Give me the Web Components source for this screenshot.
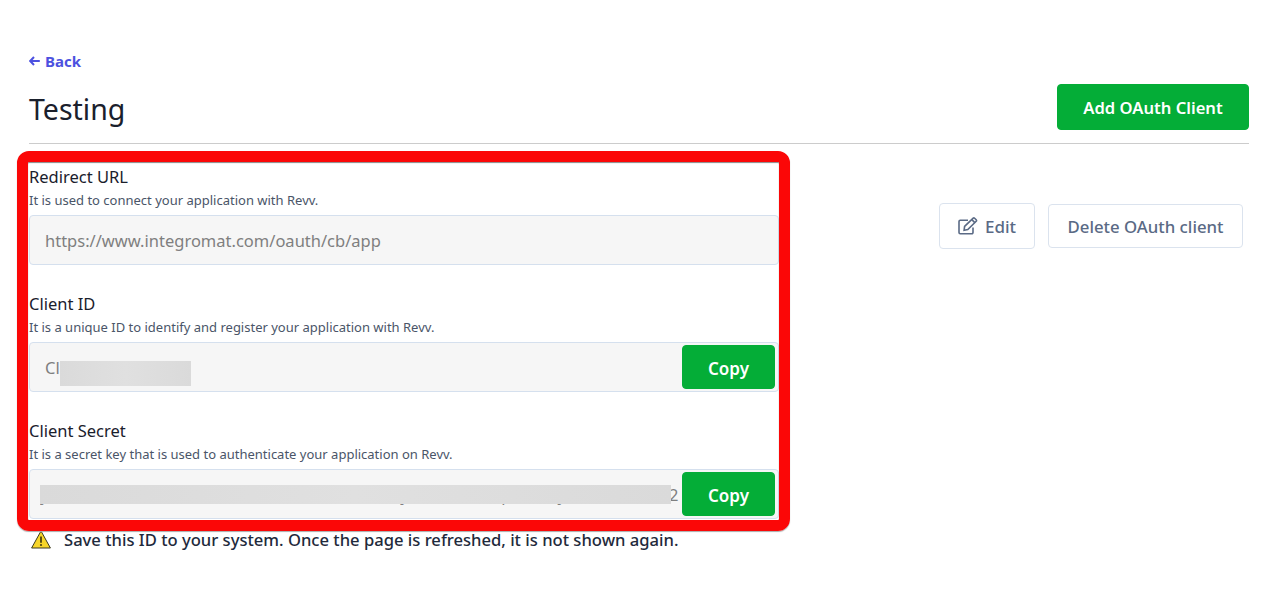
<!DOCTYPE html>
<html>
<head>
<meta charset="utf-8">
<title>Testing</title>
<style>
  html, body { margin: 0; background: #fff; }
  body { font-family: "Noto Sans", sans-serif; color: #1a202c; }
</style>
</head>
<body>
<oauth-page>
  <back-link slot="back">Back</back-link>
  <page-header slot="header">
    Testing
    <app-button slot="action" kind="primary" style="width:192px;height:46px;font-size:16.6px;--text-shift:0">Add OAuth Client</app-button>
  </page-header>

  <credential-field slot="fields" label="Redirect URL" hint="It is used to connect your application with Revv." value="https://www.integromat.com/oauth/cb/app"></credential-field>

  <credential-field slot="fields" label="Client ID" hint="It is a unique ID to identify and register your application with Revv." value="Cl" copy>
    <blur-patch slot="patch" style="left:30px;top:18px;width:131px;height:25px"></blur-patch>
  </credential-field>

  <credential-field slot="fields" label="Client Secret" hint="It is a secret key that is used to authenticate your application on Revv." value="yaaaaaaaaaaaaaaaaaaaaaaaaaaaaaaaaaaaaaayaaaaaaaaaapaaaaayaaaaaaaaaai/2" inset copy>
    <blur-patch slot="patch" style="left:10px;top:15px;width:631px;height:19px"></blur-patch>
  </credential-field>

  <warning-note slot="fields">Save this ID to your system. Once the page is refreshed, it is not shown again.</warning-note>

  <app-button slot="actions" style="width:96px;height:46px;--text-shift:0">
    <svg slot="icon" width="20" height="18" viewBox="0 0 20 18" fill="none" stroke="#5a6a85" stroke-width="1.6"><path d="M15 10.5V15.5a1.2 1.2 0 0 1-1.2 1.2H2.2A1.2 1.2 0 0 1 1 15.5V4.4a1.2 1.2 0 0 1 1.2-1.2H10"/><path d="M6.6 9.4 15.2 1.2a1 1 0 0 1 1.4 0l1.6 1.6a1 1 0 0 1 0 1.4L9.8 12.6l-3.7.6z"/><path d="M13.8 2.6l3 3"/></svg>
    Edit
  </app-button>
  <app-button slot="actions" style="width:195px;height:44px;margin-top:1px;font-size:16.8px;--text-shift:0">Delete OAuth client</app-button>
</oauth-page>

<script>
class OauthPage extends HTMLElement {
  constructor() {
    super()
    this.attachShadow({ mode: 'open' })
  }

  connectedCallback() {
    this.shadowRoot.innerHTML = `
      <style>
        :host { display: block; position: relative; box-sizing: border-box; width: 1282px; height: 596px; padding: 50px 33px 0 29px; overflow: hidden; }
        .row { display: flex; align-items: flex-start; }
        .fields { display: block; width: 750px; margin-top: 21px; flex: none; }
        .actions { display: flex; gap: 13px; align-items: flex-start; margin: 59px 0 0 160px; }
        .annotation {
          position: absolute; left: 17px; top: 151px; width: 773px; height: 380px;
          box-sizing: border-box; border: 11px solid #fb0707; border-radius: 12px;
          box-shadow: 0 1px 1px #aaa, inset 0 1px 1px #888;
          pointer-events: none;
        }
      </style>
      <slot name="back"></slot>
      <slot name="header"></slot>
      <div class="row">
        <div class="fields"><slot name="fields"></slot></div>
        <div class="actions"><slot name="actions"></slot></div>
      </div>
      <div class="annotation"></div>
    `
  }
}

class BackLink extends HTMLElement {
  constructor() {
    super()
    this.attachShadow({ mode: 'open' })
  }

  connectedCallback() {
    this.shadowRoot.innerHTML = `
      <style>
        :host { display: flex; align-items: center; gap: 5px; height: 22px; font-size: 15px; font-weight: 700; color: #4c51e0; }
        svg { display: block; }
      </style>
      <svg width="11" height="10" viewBox="0 0 11 10" fill="none" stroke="#4c51e0" stroke-width="2"><path d="M10.8 5H1.4M5 1 1.2 5 5 9"/></svg>
      <span><slot></slot></span>
    `
  }
}

class PageHeader extends HTMLElement {
  constructor() {
    super()
    this.attachShadow({ mode: 'open' })
  }

  connectedCallback() {
    this.shadowRoot.innerHTML = `
      <style>
        :host { display: flex; justify-content: space-between; align-items: flex-start; box-sizing: border-box; height: 72px; border-bottom: 1px solid #cccccc; padding-top: 1px; }
        h1 { margin: 16px 0 0; font-size: 28.5px; line-height: 40px; font-weight: 400; color: #1a202c; }
        .action { margin-top: 11px; }
      </style>
      <h1><slot></slot></h1>
      <div class="action"><slot name="action"></slot></div>
    `
  }
}

class AppButton extends HTMLElement {
  constructor() {
    super()
    this.attachShadow({ mode: 'open' })
  }

  connectedCallback() {
    this.shadowRoot.innerHTML = `
      <style>
        :host { display: flex; align-items: center; justify-content: center; gap: 7px; box-sizing: border-box; border: 1px solid #dbe3ee; border-radius: 4px; background: #fff; color: #5a6a85; font-size: 17px; font-weight: 500; white-space: nowrap; }
        :host([kind="primary"]) { background: #04ad37; border-color: #04ad37; color: #fff; font-weight: 600; }
        ::slotted(svg) { display: block; }
        span { padding-top: var(--text-shift, 2px); }
      </style>
      <slot name="icon"></slot>
      <span><slot></slot></span>
    `
  }
}

class BlurPatch extends HTMLElement {
  constructor() {
    super()
    this.attachShadow({ mode: 'open' })
    this.shadowRoot.innerHTML = `
      <style>
        :host { display: block; position: absolute; background: linear-gradient(90deg, #dadada, #e0e0e0 50%, #dadada); }
      </style>
    `
  }
}

class CredentialField extends HTMLElement {
  constructor() {
    super()
    this.attachShadow({ mode: 'open' })
  }

  connectedCallback() {
    const copyButton = this.hasAttribute('copy')
      ? '<app-button kind="primary" style="width:93px;height:44px;flex:none">Copy</app-button>'
      : ''

    this.shadowRoot.innerHTML = `
      <style>
        :host { display: block; margin-bottom: 27px; }
        .label { font-size: 16.5px; line-height: 24px; color: #1a202c; }
        .hint { font-size: 13px; line-height: 20px; margin: 1px 0 5px; color: #4a5568; }
        .box { position: relative; display: flex; align-items: center; box-sizing: border-box; height: 50px; padding: 0 3px 0 15px; background: #f6f6f6; border: 1px solid #d5e0ee; border-radius: 4px; }
        :host([inset]) .box { padding-left: 10px; }
        .value { flex: 1; min-width: 0; overflow: hidden; white-space: nowrap; font-size: 16.5px; color: #7f7f7f; }
      </style>
      <div class="label">${this.getAttribute('label')}</div>
      <div class="hint">${this.getAttribute('hint')}</div>
      <div class="box">
        <div class="value">${this.getAttribute('value')}</div>
        ${copyButton}
        <slot name="patch"></slot>
      </div>
    `
  }
}

class WarningNote extends HTMLElement {
  constructor() {
    super()
    this.attachShadow({ mode: 'open' })
  }

  connectedCallback() {
    this.shadowRoot.innerHTML = `
      <style>
        :host { display: flex; align-items: center; gap: 13px; height: 24px; margin-top: -19px; padding-left: 2px; font-size: 16.6px; font-weight: 500; color: #1f2a3c; white-space: nowrap; }
        svg { display: block; }
      </style>
      <svg width="20" height="19" viewBox="0 0 20 19"><path d="M10 1 19.4 18H.6z" fill="#f7d629" stroke="#3a3a20" stroke-width="1" stroke-linejoin="round"/><path d="M10 6.5v6.2" stroke="#4a4210" stroke-width="1.8"/><circle cx="10" cy="15" r="1.1" fill="#4a4210"/></svg>
      <span><slot></slot></span>
    `
  }
}

customElements.define("oauth-page", OauthPage)
customElements.define("back-link", BackLink)
customElements.define("page-header", PageHeader)
customElements.define("app-button", AppButton)
customElements.define("blur-patch", BlurPatch)
customElements.define("credential-field", CredentialField)
customElements.define("warning-note", WarningNote)
</script>
</body>
</html>
